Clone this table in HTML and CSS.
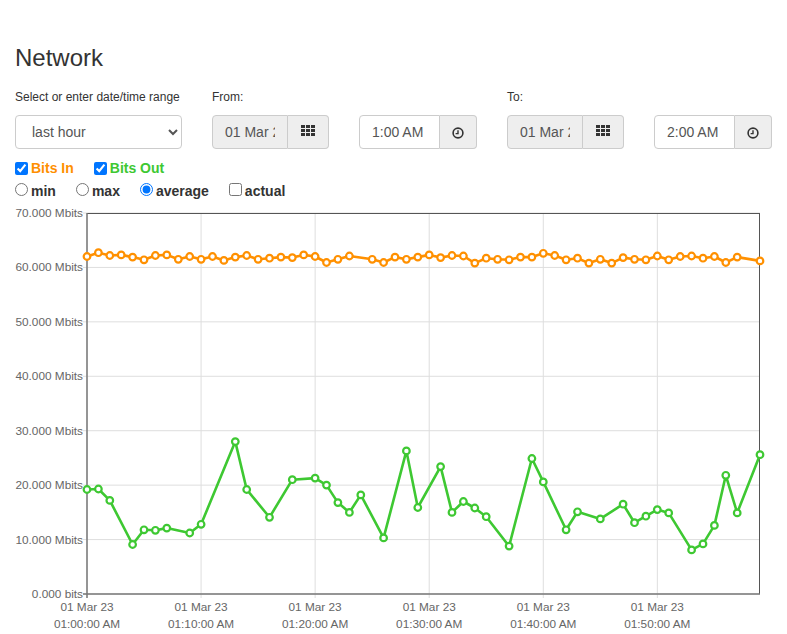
FILE: index.html
```html
<!DOCTYPE html>
<html lang="en">
<head>
<meta charset="utf-8">
<title>Network</title>
<link rel="stylesheet" href="styles.css">
</head>
<body>
<div class="page">
  <h1 class="title">Network</h1>
  <div class="controls">
    <div class="col col-range">
      <label class="field-label">Select or enter date/time range</label>
      <select class="range-select"><option>last hour</option></select>
    </div>
    <div class="col">
      <label class="field-label">From:</label>
      <div class="pair">
        <div class="input-group date-group">
          <input class="field date-input" value="01 Mar 2023" readonly>
          <span class="addon addon-date">
            <svg class="icon-grid" width="14" height="11" viewBox="0 0 14 11"><g fill="#333"><rect x="0" y="0" width="4" height="3"/><rect x="5" y="0" width="4" height="3"/><rect x="10" y="0" width="4" height="3"/><rect x="0" y="4" width="4" height="3"/><rect x="5" y="4" width="4" height="3"/><rect x="10" y="4" width="4" height="3"/><rect x="0" y="8" width="4" height="3"/><rect x="5" y="8" width="4" height="3"/><rect x="10" y="8" width="4" height="3"/></g></svg>
          </span>
        </div>
        <div class="input-group time-group">
          <input class="field time-input" value="1:00 AM">
          <span class="addon addon-time">
            <svg class="icon-clock" width="12" height="12" viewBox="0 0 12 12"><circle cx="6" cy="6" r="4.9" fill="none" stroke="#333" stroke-width="1.6"/><path d="M6 3.2V6.6H3.6" fill="none" stroke="#333" stroke-width="1.4"/></svg>
          </span>
        </div>
      </div>
    </div>
    <div class="col">
      <label class="field-label">To:</label>
      <div class="pair">
        <div class="input-group date-group">
          <input class="field date-input" value="01 Mar 2023" readonly>
          <span class="addon addon-date">
            <svg class="icon-grid" width="14" height="11" viewBox="0 0 14 11"><g fill="#333"><rect x="0" y="0" width="4" height="3"/><rect x="5" y="0" width="4" height="3"/><rect x="10" y="0" width="4" height="3"/><rect x="0" y="4" width="4" height="3"/><rect x="5" y="4" width="4" height="3"/><rect x="10" y="4" width="4" height="3"/><rect x="0" y="8" width="4" height="3"/><rect x="5" y="8" width="4" height="3"/><rect x="10" y="8" width="4" height="3"/></g></svg>
          </span>
        </div>
        <div class="input-group time-group">
          <input class="field time-input" value="2:00 AM">
          <span class="addon addon-time">
            <svg class="icon-clock" width="12" height="12" viewBox="0 0 12 12"><circle cx="6" cy="6" r="4.9" fill="none" stroke="#333" stroke-width="1.6"/><path d="M6 3.2V6.6H3.6" fill="none" stroke="#333" stroke-width="1.4"/></svg>
          </span>
        </div>
      </div>
    </div>
  </div>
  <div class="series">
    <label class="opt opt-in"><input type="checkbox" checked>Bits In</label>
    <label class="opt opt-out"><input type="checkbox" checked>Bits Out</label>
  </div>
  <div class="modes">
    <label class="opt"><input type="radio" name="mode">min</label>
    <label class="opt"><input type="radio" name="mode">max</label>
    <label class="opt"><input type="radio" name="mode" checked>average</label>
    <label class="opt"><input type="checkbox">actual</label>
  </div>
</div>
<div class="chart">
  <svg id="chart" class="chart-svg" width="787" height="433" viewBox="0 201 787 433"></svg>
</div>
<script src="chart.js"></script>
</body>
</html>
```
FILE: styles.css
```css
html, body {
  margin: 0;
  padding: 0;
  background: #fff;
}
body {
  font-family: "Liberation Sans", Arial, Helvetica, sans-serif;
  color: #333;
  font-size: 14px;
  width: 787px;
}
.page {
  padding: 0 15px;
}
.title {
  margin: 45px 0 0;
  font-size: 24px;
  font-weight: 400;
  line-height: 26px;
  color: #333;
}
.controls {
  display: flex;
  gap: 30px;
  margin-top: 18px;
}
.col {
  display: flex;
  flex-direction: column;
}
.field-label {
  font-size: 12px;
  line-height: 17px;
  margin-bottom: 9px;
  font-weight: 400;
  color: #333;
}
.range-select {
  width: 167px;
  height: 34px;
  box-sizing: border-box;
  padding: 6px 12px;
  font: 14px "Liberation Sans", Arial, sans-serif;
  color: #555;
  border: 1px solid #ccc;
  border-radius: 4px;
  background-color: #fff;
}
.pair {
  display: flex;
  gap: 30px;
}
.input-group {
  display: flex;
  height: 34px;
}
.field {
  box-sizing: border-box;
  height: 34px;
  padding: 6px 12px;
  font: 14px "Liberation Sans", Arial, sans-serif;
  color: #555;
  border: 1px solid #ccc;
  border-radius: 4px 0 0 4px;
  background: #fff;
  outline: none;
  margin: 0;
}
.date-input {
  width: 76px;
  background: #eee;
}
.time-input {
  width: 81px;
}
.addon {
  box-sizing: border-box;
  height: 34px;
  display: flex;
  align-items: center;
  justify-content: center;
  background: #eee;
  border: 1px solid #ccc;
  border-left: 0;
  border-radius: 0 4px 4px 0;
}
.addon-date {
  width: 41px;
}
.addon-time {
  width: 37px;
}
.icon-grid {
  display: block;
  margin-top: -3px;
}
.icon-clock {
  display: block;
  margin-top: 1px;
}
.series, .modes {
  display: flex;
  gap: 20px;
  line-height: 20px;
  font-weight: 700;
  font-size: 14px;
}
.series {
  margin-top: 9px;
}
.modes {
  margin-top: 3px;
}
.opt {
  display: inline-flex;
  align-items: center;
}
.opt input {
  margin: 0 3px 0 0;
  width: 13px;
  height: 13px;
}
.modes .opt input {
  align-self: flex-start;
  margin-top: 1.5px;
}
.opt-in {
  color: #ff8f00;
}
.opt-out {
  color: #3ec832;
}
.chart {
  display: block;
}
.chart-svg {
  display: block;
}
.axis-label {
  font-family: "Liberation Sans", Arial, Helvetica, sans-serif;
  font-size: 11.8px;
  fill: #666;
}
```
FILE: chart.js
```js
(function () {
  var NS = "http://www.w3.org/2000/svg";
  var svg = document.getElementById("chart");
  var L = 87, R = 760, T = 213, B = 594;
  var step = (R - L) / 59;
  function x(k) { return L + k * step; }
  function y(v) { return B - (v / 70) * (B - T); }
  function el(name, attrs, text) {
    var e = document.createElementNS(NS, name);
    for (var a in attrs) e.setAttribute(a, attrs[a]);
    if (text) e.textContent = text;
    svg.appendChild(e);
    return e;
  }
  var yl = ["0.000 bits", "10.000 Mbits", "20.000 Mbits", "30.000 Mbits", "40.000 Mbits", "50.000 Mbits", "60.000 Mbits", "70.000 Mbits"];
  for (var i = 0; i <= 7; i++) {
    var yy = y(i * 10);
    el("line", { x1: 83, x2: R, y1: yy, y2: yy, stroke: "#dedede", "stroke-width": 1 });
    el("text", { x: 83, y: yy + 4, "text-anchor": "end", "class": "axis-label" }, yl[i]);
  }
  var times = ["01:00:00 AM", "01:10:00 AM", "01:20:00 AM", "01:30:00 AM", "01:40:00 AM", "01:50:00 AM"];
  for (var j = 0; j < 6; j++) {
    var xx = x(j * 10);
    el("line", { x1: xx, x2: xx, y1: T, y2: B + 4, stroke: "#dedede", "stroke-width": 1 });
    el("text", { x: xx, y: 611, "text-anchor": "middle", "class": "axis-label" }, "01 Mar 23");
    el("text", { x: xx, y: 628, "text-anchor": "middle", "class": "axis-label" }, times[j]);
  }
  el("line", { x1: L, x2: R, y1: T + 0.5, y2: T + 0.5, stroke: "#555", "stroke-width": 1 });
  el("line", { x1: R - 0.5, x2: R - 0.5, y1: T, y2: B, stroke: "#555", "stroke-width": 1 });
  el("line", { x1: L, x2: L, y1: T, y2: B + 4, stroke: "#777", "stroke-width": 1.5 });
  el("line", { x1: 83, x2: R, y1: B, y2: B, stroke: "#777", "stroke-width": 1.5 });

  var bitsIn = [62.0, 62.7, 62.2, 62.3, 61.9, 61.4, 62.2, 62.3, 61.5, 62.0,
    61.5, 62.0, 61.3, 61.9, 62.2, 61.5, 61.7, 61.9, 61.8, 62.3,
    62.0, 60.9, 61.5, 62.1, null, 61.5, 60.9, 61.9, 61.5, 61.9,
    62.3, 61.8, 62.2, 62.1, 60.8, 61.7, 61.5, 61.4, 61.9, 61.9,
    62.6, 62.2, 61.4, 61.7, 60.8, 61.5, 60.8, 61.8, 61.5, 61.4,
    62.1, 61.4, 62.0, 62.1, 61.7, 62.0, 60.9, 61.9, null, 61.2];
  var bitsOut = [19.2, 19.3, 17.2, null, 9.1, 11.8, 11.7, 12.1, null, 11.2,
    12.8, null, null, 28.0, 19.2, null, 14.1, null, 21.0, null,
    21.3, 20.0, 16.8, 15.0, 18.2, null, 10.3, null, 26.3, 15.9,
    null, 23.4, 15.0, 17.0, 15.8, 14.2, null, 8.8, null, 24.9,
    20.6, null, 11.8, 15.1, null, 13.8, null, 16.5, 13.1, 14.3,
    15.5, 14.9, null, 8.1, 9.2, 12.6, 21.8, 14.9, null, 25.6];

  function series(data, color) {
    var pts = [];
    for (var k = 0; k < data.length; k++) {
      if (data[k] !== null) pts.push([x(k), y(data[k])]);
    }
    el("polyline", {
      points: pts.map(function (p) { return p[0].toFixed(1) + "," + p[1].toFixed(1); }).join(" "),
      fill: "none", stroke: color, "stroke-width": 2.6, "stroke-linejoin": "round"
    });
    pts.forEach(function (p) {
      el("circle", { cx: p[0].toFixed(1), cy: p[1].toFixed(1), r: 3.3, fill: "#fff", stroke: color, "stroke-width": 2.2 });
    });
  }
  series(bitsIn, "#ff9000");
  series(bitsOut, "#3ec832");
})();
```
